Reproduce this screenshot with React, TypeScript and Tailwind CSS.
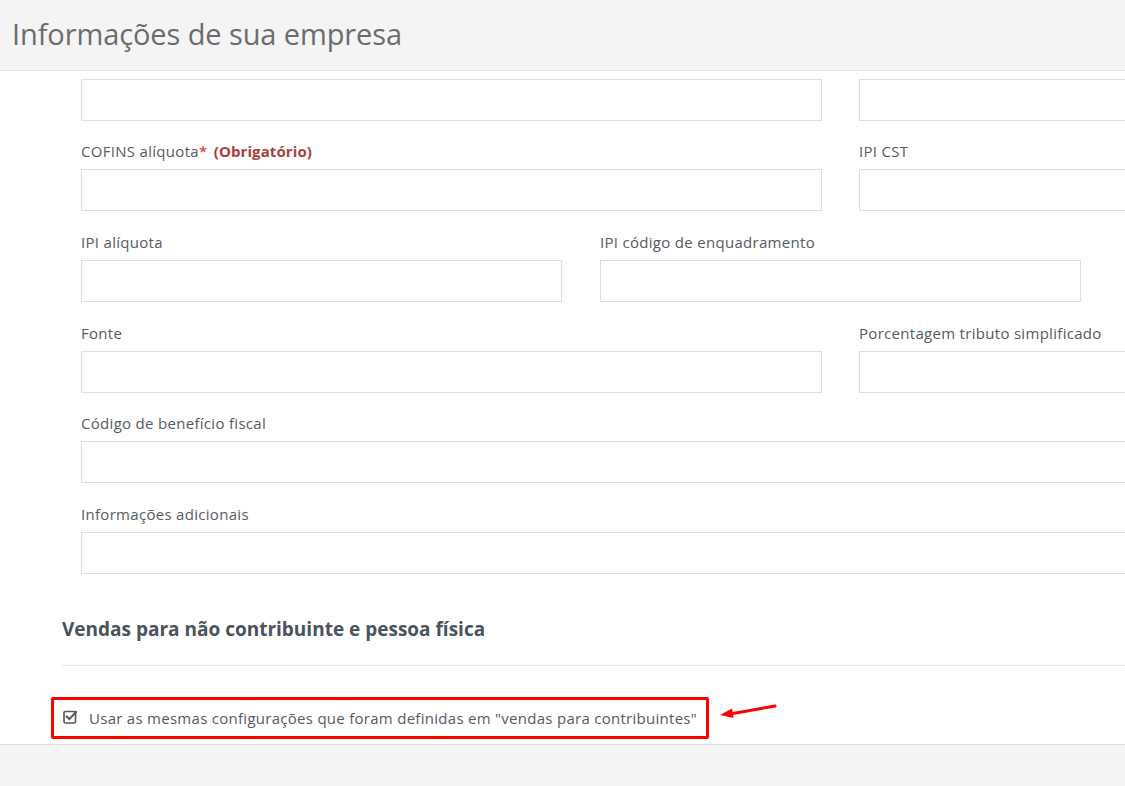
import React from "react";

const font = { fontFamily: '"Open Sans", "Noto Sans", sans-serif' };

function Label({ children }: { children: React.ReactNode }) {
  return <div className="h-[20px] leading-[20px] text-[15px] tracking-[0.3px] text-[#555b61] mb-[8px] whitespace-nowrap">{children}</div>;
}

function Input({ w }: { w: string }) {
  return <div className={`h-[42px] border border-[#dcdfe0] bg-white shrink-0 ${w}`} />;
}

export default function App() {
  return (
    <div className="w-[1125px] h-[786px] overflow-hidden bg-white flex flex-col" style={font}>
      <header className="h-[71px] shrink-0 bg-[#f4f4f4] border-b border-[#e4e4e4] flex items-center pl-[12px] pb-[3px]">
        <h1 className="text-[29px] text-[#6c6c6c] tracking-[-0.1px]">Informações de sua empresa</h1>
      </header>

      <main className="flex-1 flex flex-col pt-[8px] overflow-hidden">
        <div className="pl-[81px] flex flex-col">
          <div className="flex gap-[37px]">
            <Input w="w-[741px]" />
            <Input w="w-[400px]" />
          </div>

          <div className="flex gap-[37px] mt-[20px]">
            <div className="flex flex-col">
              <Label>
                COFINS alíquota<span className="text-[#e02020]">*</span>{" "}
                <span className="font-bold text-[#a8413d] ml-[2px] tracking-[0.1px]">(Obrigatório)</span>
              </Label>
              <Input w="w-[741px]" />
            </div>
            <div className="flex flex-col">
              <Label>IPI CST</Label>
              <Input w="w-[400px]" />
            </div>
          </div>

          <div className="flex gap-[38px] mt-[21px]">
            <div className="flex flex-col">
              <Label>IPI alíquota</Label>
              <Input w="w-[481px]" />
            </div>
            <div className="flex flex-col">
              <Label>IPI código de enquadramento</Label>
              <Input w="w-[481px]" />
            </div>
          </div>

          <div className="flex gap-[37px] mt-[21px]">
            <div className="flex flex-col">
              <Label>Fonte</Label>
              <Input w="w-[741px]" />
            </div>
            <div className="flex flex-col">
              <Label>Porcentagem tributo simplificado</Label>
              <Input w="w-[400px]" />
            </div>
          </div>

          <div className="flex flex-col mt-[20px]">
            <Label>Código de benefício fiscal</Label>
            <Input w="w-[1100px]" />
          </div>

          <div className="flex flex-col mt-[21px]">
            <Label>Informações adicionais</Label>
            <Input w="w-[1100px]" />
          </div>
        </div>

        <div className="pl-[62px] mt-[42px]">
          <h2 className="text-[19px] font-bold text-[#48535c] leading-[26px]">
            Vendas para não contribuinte e pessoa física
          </h2>
          <div className="mt-[23px] border-t border-[#e8e8e8]" />
        </div>

        <div className="pl-[51px] mt-[31px] flex items-center">
          <div className="h-[42px] border-[3px] border-[#ff0000] rounded-[2px] flex items-center pl-[9px] pr-[9px]">
            <svg width="15" height="15" viewBox="0 0 15 15" className="mr-[11px] mt-[-3px]">
              <rect x="1" y="2.5" width="11.5" height="11.5" rx="1.5" fill="none" stroke="#555b61" strokeWidth="1.7" />
              <path d="M3.8 7.6 L6.4 10.1 L13 3" fill="none" stroke="#555b61" strokeWidth="2.1" strokeLinecap="square" />
            </svg>
            <span className="text-[15px] tracking-[0.28px] text-[#555b61] whitespace-nowrap">
              Usar as mesmas configurações que foram definidas em "vendas para contribuintes"
            </span>
          </div>
          <svg width="60" height="20" viewBox="0 0 60 20" className="ml-[9px] mt-[-10px]">
            <path d="M57 3 L12 11" stroke="#ff0000" strokeWidth="3" strokeLinecap="round" />
            <path d="M2 12 L14 5.5 L15.5 15 Z" fill="#ff0000" />
          </svg>
        </div>
      </main>

      <footer className="h-[42px] shrink-0 bg-[#f4f4f4] border-t border-[#dedede]" />
    </div>
  );
}
